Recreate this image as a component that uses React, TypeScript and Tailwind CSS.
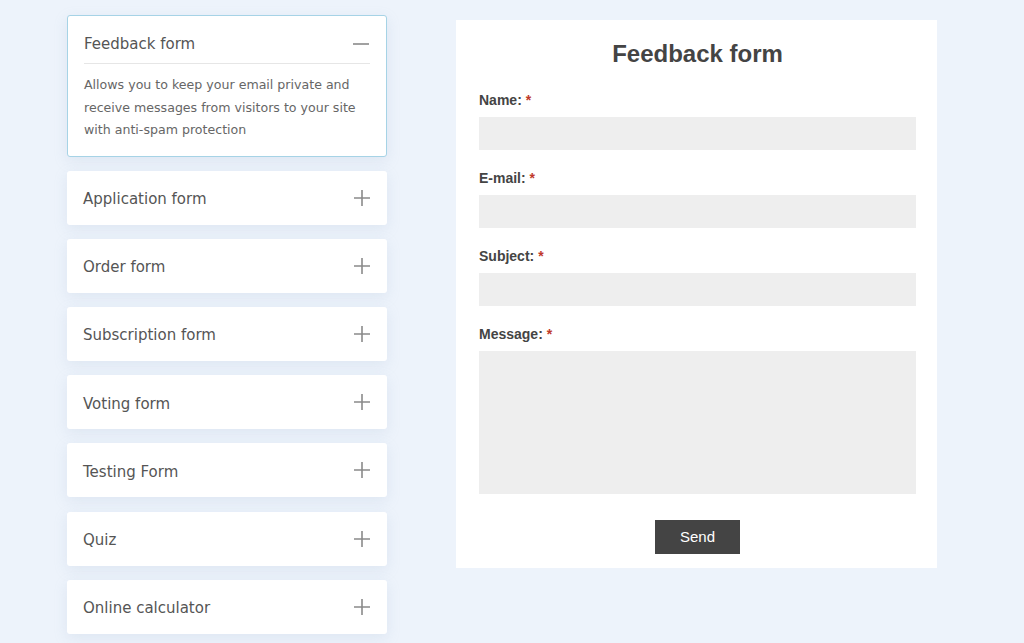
import React from "react";

const items = [
  "Application form",
  "Order form",
  "Subscription form",
  "Voting form",
  "Testing Form",
  "Quiz",
  "Online calculator",
];

function Plus() {
  return (
    <svg width="18" height="18" viewBox="0 0 18 18" className="shrink-0">
      <path d="M9 1v16M1 9h16" stroke="#8a8a8a" strokeWidth="1.6" fill="none" />
    </svg>
  );
}

function Minus() {
  return (
    <svg width="18" height="18" viewBox="0 0 18 18" className="shrink-0">
      <path d="M1 9h16" stroke="#8a8a8a" strokeWidth="1.6" fill="none" />
    </svg>
  );
}

function Field({ label, tall }: { label: string; tall?: boolean }) {
  return (
    <div className="flex flex-col">
      <div className="text-[14px] font-bold text-[#444] leading-[17px] mb-[8px]">
        {label} <span className="text-[#c0392b]">*</span>
      </div>
      <div className={`bg-[#eeeeee] w-full ${tall ? "h-[143px]" : "h-[33px]"}`} />
    </div>
  );
}

export default function App() {
  return (
    <div className="w-[1024px] h-[643px] overflow-hidden bg-[#edf3fb] flex">
      <div
        className="w-[320px] ml-[67px] mt-[15px] flex flex-col gap-[14.2px]"
        style={{ fontFamily: '"DejaVu Sans", sans-serif' }}
      >
        <div className="bg-white border border-[#a6d3e6] rounded-[3px] px-[16px] pt-[18px] pb-[14px] shadow-[0_4px_14px_rgba(150,170,200,0.18)]">
          <div className="flex items-center justify-between">
            <span className="text-[15px] text-[#555] leading-[20px]">Feedback form</span>
            <Minus />
          </div>
          <div className="h-px bg-[#e6e6e6] mt-[9px] mb-[10px]" />
          <p className="text-[12.6px] leading-[22.5px] text-[#666]">
            Allows you to keep your email private and receive messages from visitors to your site with anti-spam protection
          </p>
        </div>
        {items.map((t) => (
          <div
            key={t}
            className="bg-white rounded-[3px] h-[54px] px-[16px] flex items-center justify-between shadow-[0_4px_14px_rgba(150,170,200,0.18)]"
          >
            <span className="text-[15px] text-[#555] mt-[3px]">{t}</span>
            <Plus />
          </div>
        ))}
      </div>
      <div
        className="ml-[69px] mt-[20px] w-[481px] h-[548px] bg-white pl-[23px] pr-[21px] pt-[20px] flex flex-col"
        style={{ fontFamily: '"Liberation Sans", Arial, sans-serif' }}
      >
        <h1 className="text-center text-[24px] font-bold text-[#444] leading-[28px]">Feedback form</h1>
        <div className="mt-[24px] flex flex-col gap-[20px]">
          <Field label="Name:" />
          <Field label="E-mail:" />
          <Field label="Subject:" />
          <Field label="Message:" tall />
        </div>
        <div className="flex justify-center mt-[26px]">
          <div className="w-[85px] h-[34px] bg-[#444] text-white text-[15px] flex items-center justify-center">
            Send
          </div>
        </div>
      </div>
    </div>
  );
}
